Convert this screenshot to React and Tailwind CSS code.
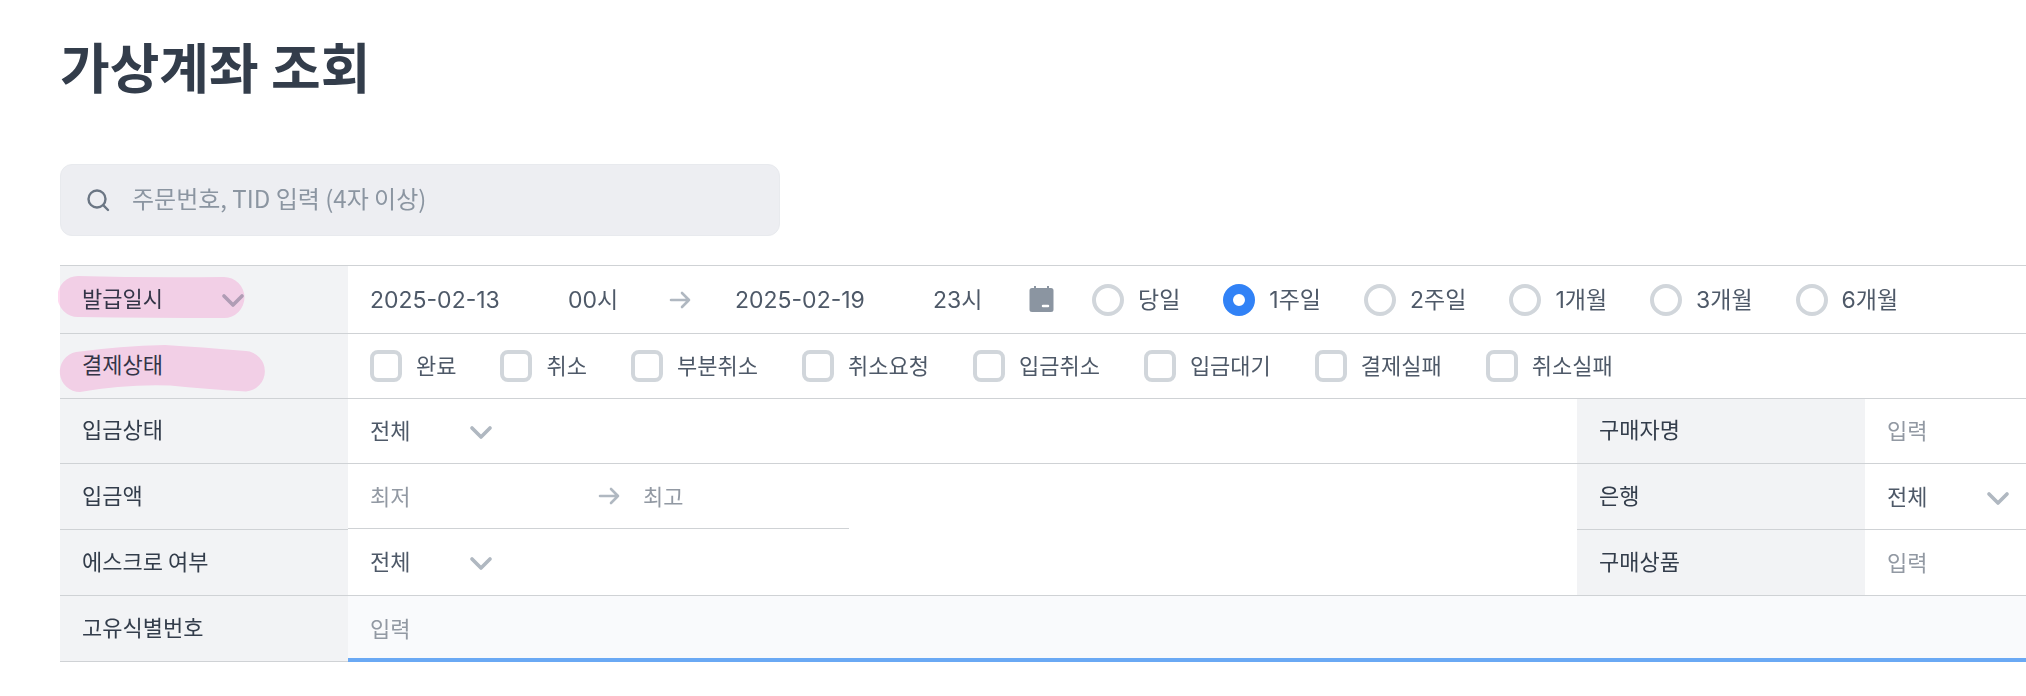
import { useState } from "react";

const periods = ["당일", "1주일", "2주일", "1개월", "3개월", "6개월"];
const statuses = ["완료", "취소", "부분취소", "취소요청", "입금취소", "입금대기", "결제실패", "취소실패"];

const headCell = "flex items-center border-t border-[#cfd2d5] bg-[#f2f3f5] pb-1.5 pl-[22px] text-[#333d4b]";
const bodyCell = "flex min-w-0 items-center border-t border-[#cfd2d5] pl-[22px]";
const field = "bg-transparent outline-none placeholder:text-[#9299a3] placeholder:opacity-100";

function Chevron() {
  return (
    <svg className="pointer-events-none absolute right-0 top-1/2 -mt-1.5 h-5 w-6" viewBox="0 0 24 20" fill="none" stroke="#b0b8c1" strokeWidth="3.7" strokeLinecap="round" strokeLinejoin="round" aria-hidden="true">
      <path d="M3 5l9 9 9-9" />
    </svg>
  );
}

function Arrow() {
  return (
    <svg className="h-6 w-6 shrink-0" viewBox="0 0 24 24" fill="none" stroke="#b0b8c1" strokeWidth="2.6" strokeLinecap="round" strokeLinejoin="round" aria-hidden="true">
      <path d="M3 12h18M14 5l7 7-7 7" />
    </svg>
  );
}

function Select({ id, label, option, wide }) {
  return (
    <div className={wide ? "relative w-[163px]" : "relative w-[123px]"}>
      <select id={id} aria-label={label} className="w-full appearance-none bg-transparent outline-none">
        <option>{option}</option>
      </select>
      <Chevron />
    </div>
  );
}

export default function App() {
  const [period, setPeriod] = useState("1주일");
  return (
    <main className="bg-white pl-[60px] font-['Noto_Sans_CJK_KR',sans-serif] text-[22px] leading-8 text-[#4e5968]">
      <h1 className="pt-[26px] text-[54px] font-bold leading-[80px] text-[#333d4b]">가상계좌 조회</h1>

      <div className="mt-[58px] flex h-[72px] w-[720px] items-center gap-[19px] rounded-xl border border-[#e8eaee] bg-[#edeef2] pl-6 text-2xl">
        <svg className="h-7 w-7 shrink-0" viewBox="0 0 28 28" fill="none" stroke="#6b7684" strokeWidth="2.4" strokeLinecap="round" aria-hidden="true">
          <circle cx="12" cy="13" r="8.5" />
          <path d="M18.2 19.2L23 24" />
        </svg>
        <input type="search" aria-label="주문번호, TID 검색" placeholder="주문번호, TID 입력 (4자 이상)" className="min-w-0 flex-1 bg-transparent pb-1 outline-none placeholder:text-[#8b95a1] placeholder:opacity-100" />
      </div>

      <form className="mt-[29px] grid grid-cols-[288px_minmax(0,1fr)_288px_161px] grid-rows-[68px_65px_65px_66px_66px_67px]">
        <div className={`${headCell} relative`}>
          <Select id="date-kind" label="조회 기준" option="발급일시" wide />
          <svg className="pointer-events-none absolute -left-0.5 top-2 h-12 w-48 mix-blend-multiply" viewBox="0 0 192 48" fill="#ffdaf0" aria-hidden="true">
            <path d="M20 2Q90 4 166 3A20.500 20.500 0 0 1 166 44Q95 44 20 43A20.500 20.500 0 0 1 20 2Z" />
          </svg>
        </div>
        <div className={`${bodyCell} col-span-3 font-['Inter','Noto_Sans_CJK_KR',sans-serif] text-[23px]`}>
          <input aria-label="시작일" defaultValue="2025-02-13" className={`${field} w-[198px]`} />
          <input aria-label="시작 시각" defaultValue="00시" className={`${field} w-[100px]`} />
          <Arrow />
          <input aria-label="종료일" defaultValue="2025-02-19" className={`${field} ml-[43px] w-[198px]`} />
          <input aria-label="종료 시각" defaultValue="23시" className={`${field} w-[92px]`} />
          <button type="button" aria-label="달력 열기" className="mr-[35px] shrink-0">
            <svg className="h-8 w-8" viewBox="0 0 32 32" aria-hidden="true">
              <path fill="#8b95a1" d="M7 4h19a2.500 2.500 0 0 1 2.500 2.500v19a2.500 2.500 0 0 1-2.500 2.500H7a2.500 2.500 0 0 1-2.500-2.500v-19A2.500 2.500 0 0 1 7 4zM9 2h2v3H9zM22 2h2v3h-2z" />
              <path stroke="#fff" strokeWidth="2.500" strokeLinecap="round" d="M18 22h5" />
            </svg>
          </button>
          <div className="flex gap-[43px]">
            {periods.map((name) => (
              <label key={name} className="flex items-center gap-3.5 whitespace-nowrap">
                <input type="radio" name="period" checked={period === name} onChange={() => setPeriod(name)} className="h-8 w-8 appearance-none rounded-full border-4 border-[#d1d6db] bg-white checked:border-[10px] checked:border-[#3182f6]" />
                {name}
              </label>
            ))}
          </div>
        </div>

        <div className={`${headCell} relative`}>
          결제상태
          <svg className="pointer-events-none absolute -left-0.5 top-2 h-14 w-52 mix-blend-multiply" viewBox="0 0 208 56" fill="#ffdaf0" aria-hidden="true">
            <path d="M18 10Q62 4 107 3Q142 5 188 9A20.300 20.300 0 0 1 188 49.500Q147 47 112 43.500Q67 42 22 50A20.200 20.200 0 0 1 18 10Z" />
          </svg>
        </div>
        <div className={`${bodyCell} col-span-3 gap-11`}>
          {statuses.map((name) => (
            <label key={name} className="flex items-center gap-3.5 whitespace-nowrap">
              <input type="checkbox" className="h-8 w-8 appearance-none rounded-lg border-4 border-[#d1d6db] bg-white checked:bg-[#3182f6]" />
              <span className="pb-1">{name}</span>
            </label>
          ))}
        </div>

        <label htmlFor="deposit-state" className={headCell}>입금상태</label>
        <div className={`${bodyCell} pb-1`}><Select id="deposit-state" option="전체" /></div>
        <label htmlFor="buyer" className={headCell}>구매자명</label>
        <div className={`${bodyCell} pb-1`}><input id="buyer" placeholder="입력" className={`${field} w-full`} /></div>

        <label htmlFor="amount-min" className={headCell}>입금액</label>
        <div className="flex border-t border-[#cfd2d5]">
          <div className="flex w-[501px] items-center border-b border-[#cfd2d5] pl-[22px]">
            <input id="amount-min" placeholder="최저" className={`${field} w-[227px] pb-0.5`} />
            <Arrow />
            <input aria-label="최고 입금액" placeholder="최고" className={`${field} ml-[22px] w-[180px] pb-0.5`} />
          </div>
        </div>
        <label htmlFor="bank" className={headCell}>은행</label>
        <div className={`${bodyCell} pb-1`}><Select id="bank" option="전체" /></div>

        <label htmlFor="escrow" className={headCell}>에스크로 여부</label>
        <div className="flex items-center pb-1 pl-[22px]"><Select id="escrow" option="전체" /></div>
        <label htmlFor="product" className={headCell}>구매상품</label>
        <div className={`${bodyCell} pb-1`}><input id="product" placeholder="입력" className={`${field} w-full`} /></div>

        <label htmlFor="unique-id" className={`${headCell} border-b`}>고유식별번호</label>
        <div className="col-span-3 flex items-center border-b-4 border-t border-b-[#6aa9f4] border-t-[#cfd2d5] bg-[#f9fafc] pl-[22px]">
          <input id="unique-id" placeholder="입력" className={`${field} w-full`} />
        </div>
      </form>
    </main>
  );
}
